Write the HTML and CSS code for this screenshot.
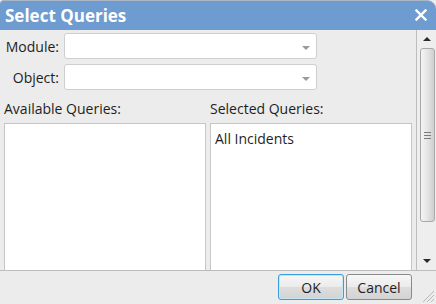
FILE: index.html
```html
<!DOCTYPE html>
<html>
<head>
<meta charset="utf-8">
<link rel="stylesheet" href="styles.css">
</head>
<body>
<div class="dialog">
  <div class="titlebar">
    <span class="title">Select Queries</span>
    <svg class="close" width="12" height="12" viewBox="0 0 12 12"><path d="M1.5 1.5 L10.5 10.5 M10.5 1.5 L1.5 10.5" stroke="#fff" stroke-width="2.4" stroke-linecap="square"/></svg>
  </div>
  <div class="main">
    <div class="content">
      <div class="field">
        <label class="lbl">Module:</label>
        <div class="select"><span class="caret"></span></div>
      </div>
      <div class="field">
        <label class="lbl">Object:</label>
        <div class="select"><span class="caret"></span></div>
      </div>
      <div class="lists">
        <div class="col">
          <div class="col-title">Available Queries:</div>
          <div class="listbox"></div>
        </div>
        <div class="col">
          <div class="col-title">Selected Queries:</div>
          <div class="listbox"><div class="item">All Incidents</div></div>
        </div>
      </div>
    </div>
    <div class="scrollbar">
      <span class="arrow up"></span>
      <div class="thumb"><span class="grip"></span></div>
      <span class="arrow down"></span>
    </div>
  </div>
  <div class="footer">
    <button class="btn ok">OK</button>
    <button class="btn">Cancel</button>
    <svg class="resize" width="14" height="14" viewBox="0 0 14 14"><path d="M13 2 L2 13 M13 6 L6 13 M13 10 L10 13" stroke="#b8b8b8" stroke-width="1"/></svg>
  </div>
</div>
</body>
</html>
```
FILE: styles.css
```css
* { box-sizing: border-box; }
html, body { margin: 0; padding: 0; }
body {
  width: 436px;
  height: 304px;
  overflow: hidden;
  font-family: "Open Sans", "Noto Sans", sans-serif;
  font-size: 14px;
  color: #1e1e1e;
  background: #ececec;
}
.dialog {
  width: 436px;
  height: 304px;
  display: flex;
  flex-direction: column;
  background: #ececec;
}
.titlebar {
  height: 30px;
  flex: none;
  background: #6e9bd0;
  border-top: 1px solid #a9b6c6;
  border-radius: 4px 9px 0 0;
  display: flex;
  align-items: center;
  justify-content: space-between;
  padding: 0 9px 1px 5px;
}
.title {
  color: #fff;
  font-weight: 700;
  font-size: 17px;
}
.close { display: block; margin-top: -1px; }
.main {
  height: 240px;
  flex: none;
  display: flex;
  overflow: hidden;
}
.content {
  flex: 1;
  padding: 3px 4px 0 4px;
  display: flex;
  flex-direction: column;
  gap: 5px;
  overflow: hidden;
}
.field {
  display: flex;
  align-items: center;
  gap: 5px;
}
.lbl {
  width: 55px;
  text-align: right;
  flex: none;
}
.select {
  width: 253px;
  height: 26px;
  background: #fff;
  border: 1px solid #cfcfcf;
  border-radius: 3px;
  position: relative;
}
.caret {
  position: absolute;
  right: 6px;
  top: 12px;
  width: 0;
  height: 0;
  border-left: 4px solid transparent;
  border-right: 4px solid transparent;
  border-top: 4px solid #9a9a9a;
}
.lists {
  margin-top: 5px;
  display: grid;
  grid-template-columns: 1fr 1fr;
  gap: 4px;
  flex: 1;
}
.col {
  display: flex;
  flex-direction: column;
  gap: 5px;
}
.col-title {
  line-height: 18px;
  height: 18px;
}
.listbox {
  flex: 1;
  min-height: 160px;
  background: #fff;
  border: 1px solid #c6c6c6;
  padding: 5px 4px;
}
.item { line-height: 20px; }
.scrollbar {
  width: 20px;
  flex: none;
  border-left: 1px solid #bdbdbd;
  background: #eeeeee;
  display: flex;
  flex-direction: column;
  align-items: center;
  padding: 7px 0 7px 1px;
}
.arrow {
  width: 0;
  height: 0;
  border-left: 4px solid transparent;
  border-right: 4px solid transparent;
  flex: none;
}
.arrow.up { border-bottom: 4px solid #2a2a2a; margin-bottom: 7px; }
.arrow.down { border-top: 4px solid #2a2a2a; margin-top: auto; }
.thumb {
  width: 15px;
  height: 174px;
  border: 1px solid #a8a8a8;
  border-radius: 3px;
  background: linear-gradient(to right, #f4f4f4 0%, #e8e8e8 40%, #cfcfcf 100%);
  display: flex;
  align-items: center;
  justify-content: center;
  flex: none;
}
.grip {
  width: 7px;
  height: 7px;
  background: repeating-linear-gradient(to bottom, #7a7a7a 0 1px, transparent 1px 3px);
}
.footer {
  flex: 1;
  border-top: 1px solid #bdbdbd;
  display: flex;
  justify-content: flex-end;
  align-items: flex-start;
  padding: 3px 0 0 0;
  gap: 2px;
  position: relative;
}
.btn {
  width: 66px;
  height: 26px;
  font-family: "Open Sans", "Noto Sans", sans-serif;
  font-size: 14px;
  color: #1e1e1e;
  border: 1px solid #8a8a8a;
  border-radius: 3px;
  background: linear-gradient(to bottom, #f7f7f7 0%, #ebebeb 50%, #dddddd 51%, #d3d3d3 100%);
  padding: 0;
}
.btn.ok {
  border-color: #3c9fd9;
  box-shadow: inset 0 0 0 1px #c5e6f9;
}
.footer .btn:last-of-type { margin-right: 24px; }
.resize {
  position: absolute;
  right: 1px;
  bottom: 1px;
}
```
